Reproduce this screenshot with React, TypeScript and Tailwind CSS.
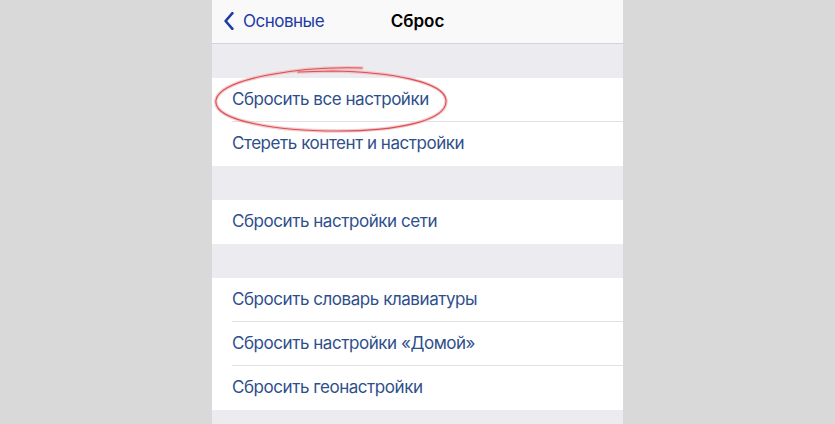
import React from 'react';

const GROUPS: string[][] = [
  ['Сбросить все настройки', 'Стереть контент и настройки'],
  ['Сбросить настройки сети'],
  ['Сбросить словарь клавиатуры', 'Сбросить настройки «Домой»', 'Сбросить геонастройки'],
];

function Row({ label, last }: { label: string; last: boolean }) {
  return (
    <div className="relative flex h-[44px] items-center bg-white pl-[20px]">
      <span className="text-[17px] tracking-[-0.45px] text-[#2e4f8c]">{label}</span>
      {!last && <div className="absolute bottom-0 left-[20px] right-0 h-px bg-[#e2e2e6]" />}
    </div>
  );
}

export default function App() {
  return (
    <div
      className="flex h-[424px] w-[835px] justify-center overflow-hidden bg-[#d9d9d9]"
      style={{ fontFamily: 'Inter, "Noto Sans", sans-serif' }}
    >
      <div className="relative flex w-[411px] flex-col bg-[#ebebf0]">
        {/* nav bar */}
        <div className="relative flex h-[44px] items-center justify-center border-b border-[#d4d4d8] bg-[#f9f9f9]">
          <div className="absolute left-[12px] top-0 flex h-full items-center gap-[9px]">
            <svg width="10" height="18" viewBox="0 0 10 18" className="mb-[1px]">
              <path d="M8.4 1.2 L1.6 9 L8.4 16.8" fill="none" stroke="#1d3aa6" strokeWidth="2.6" strokeLinecap="round" strokeLinejoin="round" />
            </svg>
            <span className="text-[17px] tracking-[-0.5px] text-[#1d3aa6]">Основные</span>
          </div>
          <span className="text-[17px] font-semibold text-black">Сброс</span>
        </div>

        {GROUPS.map((g, gi) => (
          <div key={gi} className="mt-[34px] flex flex-col">
            {g.map((label, i) => (
              <Row key={label} label={label} last={i === g.length - 1} />
            ))}
          </div>
        ))}

        {/* hand-drawn highlight */}
        <svg className="pointer-events-none absolute left-0 top-0" width="411" height="424" viewBox="0 0 411 424">
          <g fill="none" strokeLinecap="round">
            <path
              d="M150 68 C 90 66, 8 78, 4 100 C 0 122, 70 131, 125 131 C 185 131, 236 121, 234 100 C 232 82, 180 72, 120 71 L 86 72"
              stroke="#f4b4b4"
              strokeWidth="3.5"
              opacity="0.7"
            />
            <path
              d="M150 68 C 90 66, 8 78, 4 100 C 0 122, 70 131, 125 131 C 185 131, 236 121, 234 100 C 232 82, 180 72, 120 71 L 86 72"
              stroke="#d7505a"
              strokeWidth="1.1"
            />
          </g>
        </svg>
      </div>
    </div>
  );
}
